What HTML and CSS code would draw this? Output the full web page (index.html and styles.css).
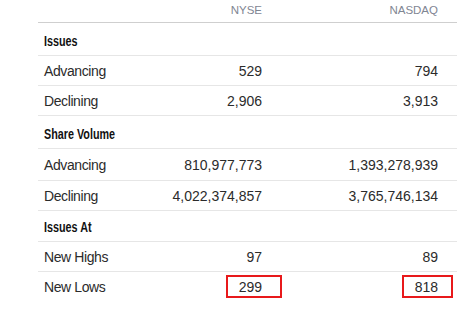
FILE: index.html
```html
<!DOCTYPE html>
<html>
<head>
<meta charset="utf-8">
<link rel="stylesheet" href="styles.css">
</head>
<body>
<div class="table">
  <div class="row head"><span></span><span class="num">NYSE</span><span class="num">NASDAQ</span></div>
  <div class="row section"><span class="label"><b>Issues</b></span></div>
  <div class="row"><span class="label">Advancing</span><span class="num">529</span><span class="num">794</span></div>
  <div class="row"><span class="label">Declining</span><span class="num">2,906</span><span class="num">3,913</span></div>
  <div class="row section"><span class="label"><b>Share Volume</b></span></div>
  <div class="row tall"><span class="label">Advancing</span><span class="num">810,977,773</span><span class="num">1,393,278,939</span></div>
  <div class="row"><span class="label">Declining</span><span class="num">4,022,374,857</span><span class="num">3,765,746,134</span></div>
  <div class="row section short"><span class="label"><b>Issues At</b></span></div>
  <div class="row"><span class="label">New Highs</span><span class="num">97</span><span class="num">89</span></div>
  <div class="row last"><span class="label">New Lows</span><span class="num mark"><span class="box box-a"></span>299</span><span class="num mark"><span class="box box-b"></span>818</span></div>
</div>
</body>
</html>
```
FILE: styles.css
```css
html, body {
  margin: 0;
  padding: 0;
  background: #fff;
}
body {
  font-family: "Liberation Sans", Arial, sans-serif;
  font-size: 14px;
  color: #2b2b2b;
}
.table {
  margin-left: 38px;
  width: 419px;
}
.row {
  display: grid;
  grid-template-columns: 130px 94px 176px;
  padding-right: 19px;
  align-items: center;
  height: 30px;
  box-sizing: border-box;
  border-bottom: 1px solid #e6e6e6;
}
.row.tall {
  height: 32px;
}
.row.last {
  border-bottom: none;
}
.head {
  height: 23px;
  align-items: start;
  padding-top: 4px;
  border-bottom: 1px solid #cfcfcf;
  font-size: 11.5px;
  color: #7f8693;
  line-height: 13px;
}
.section {
  height: 33px;
  padding-top: 3px;
}
.section.short {
  height: 31px;
  padding-top: 2px;
}
.label {
  padding-left: 6px;
  letter-spacing: -0.4px;
}
.label b {
  display: inline-block;
  font-weight: bold;
  color: #111;
  font-size: 14px;
  letter-spacing: 0;
  transform: scaleX(0.77);
  transform-origin: left center;
  white-space: nowrap;
}
.num {
  text-align: right;
}
.mark {
  position: relative;
}
.box {
  position: absolute;
  top: -4px;
  height: 23px;
  box-sizing: border-box;
  border: 2px solid #e8191b;
}
.box-a {
  right: -20px;
  width: 56px;
}
.box-b {
  right: -15px;
  width: 51px;
}
```
